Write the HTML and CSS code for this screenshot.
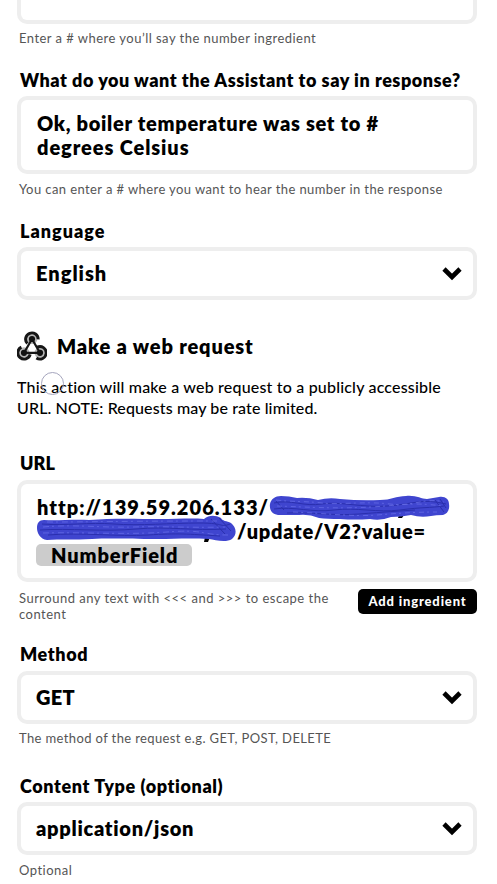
FILE: index.html
```
<!DOCTYPE html>
<html lang="en">
<head>
<meta charset="utf-8">
<title>Make a web request</title>
<link rel="stylesheet" href="styles.css">
</head>
<body>
<main class="form">
  <section class="field">
    <div class="box box-cut"></div>
    <p class="help">Enter a # where you’ll say the number ingredient</p>
  </section>

  <section class="field field-response">
    <h3 class="label label-question">What do you want the Assistant to say in response?</h3>
    <div class="box box-text">
      <p class="line line-ok">Ok, boiler temperature was set to #</p>
      <p class="line line-degrees">degrees Celsius</p>
    </div>
    <p class="help help-wide">You can enter a # where you want to hear the number in the response</p>
  </section>

  <section class="field field-language">
    <h3 class="label label-language">Language</h3>
    <div class="box select">
      <span class="value value-english">English</span>
      <svg class="chevron" viewBox="0 0 20 14"><path d="M2 2 10 10 18 2" fill="none" stroke="#000" stroke-width="4.6"/></svg>
    </div>
  </section>

  <header class="action">
    <svg class="hook" viewBox="0 0 30 30">
      <g fill="#b5b5b5"><circle cx="15" cy="7.6" r="5.5"/><circle cx="7" cy="21.8" r="5.5"/><circle cx="23" cy="21.8" r="5.5"/></g>
      <g fill="none" stroke="#161616">
        <path d="M15 8 7.5 21M15 8 22.5 21M7 21.8H23" stroke-width="2.2"/>
        <g stroke-width="2.9">
          <path d="M10.4 12.6A6.3 6.3 0 1 1 21.2 8.4"/>
          <path d="M4.4 16.1A6.3 6.3 0 1 0 13.2 23.4"/>
          <path d="M20.2 16.1A6.3 6.3 0 1 1 19.4 27"/>
        </g>
      </g>
      <g fill="#111"><circle cx="15" cy="8" r="3.1"/><circle cx="7" cy="21.8" r="3.1"/><circle cx="23" cy="21.8" r="3.1"/></g>
    </svg>
    <h2 class="title">Make a web request</h2>
  </header>
  <div class="description">
    <p class="desc-first">This action will make a web request to a publicly accessible</p>
    <p class="desc-second">URL. NOTE: Requests may be rate limited.</p>
    <span class="pointer"></span>
  </div>

  <section class="field field-url">
    <h3 class="label label-url">URL</h3>
    <div class="box box-url">
      <p class="line line-address">http://139.59.206.133/</p>
      <p class="line line-path">/update/V2?value=</p>
      <p class="line line-token"><span class="token">NumberField</span></p>
      <svg class="scribble" viewBox="0 0 420 52">
        <path fill="#000" d="M368 20h5l-2 3h-4zM174 42h5l-2 5h-4z"/>
        <path fill="#3f45cf" d="M239 9C240 4 244 1 250 1Q258 1 266 3Q276 2 287 5Q298 2 309 4Q330 6 349 5C360 5 365 1 375 1C385 0 390 4 396 4Q402 3 408 2C414 1 418 4 418 9C419 15 416 19 412 20Q405 20 400 21Q390 23 380 20Q370 22 360 22Q350 26 339 24Q324 25 309 24Q296 24 288 23Q278 19 268 20Q258 20 249 20C242 20 238 16 239 9z"/>
        <path fill="#3f45cf" d="M13 25c14 1 28-1 45 0 24-2 49-1 71-1 17 0 32-1 44 0 5-4 11-4 17-1 1 3 6 3 10 5 6 5 6 12 1 16-6 4-17 1-23 0-21-1-34 0-52 0-27 0-46-1-65 0-18 1-32 0-45 1C9 44 6 38 6 33c0-5 2-8 7-8z"/>
        <g fill="none" stroke="#2a2fae" stroke-width="1">
          <path d="M243 8c16-4 30 4 48 1s40 4 66 2 34-8 58-2M243 14c20-3 38 4 60 1s44 3 66 0 30-2 44-4M256 18c24-1 46 3 72 1s40-3 56-4M245 6l8 9M404 5l9 12M409 4l6 9"/>
          <path d="M11 29c24 2 47-2 72 0s57-1 85-1 20 5 31 1M9 35c28-2 65 2 96-1s57 2 90 0M17 40c33-3 70 2 100 0s39-1 72 1M180 24l14 15M188 23l12 13"/>
        </g>
        <g fill="none" stroke="#656be6" stroke-width=".8">
          <path d="M245 5c18 2 29 1 46 3s44-2 68 1 34-7 54-2M246 11c30 1 60 3 94 1s40-5 72-1M262 17c30 1 60 5 84 3s42-3 60-3" stroke-dasharray="5 3 2 4"/>
          <path d="M12 32c30-3 60 1 90 0s58 1 92 0M12 38c42-1 86 2 124-1s34 3 61 3M16 27c40 0 80-1 170-1" stroke-dasharray="6 3 2 4"/>
        </g>
      </svg>
    </div>
    <div class="footer">
      <p class="help help-url"><span class="help-escape">Surround any text with &lt;&lt;&lt; and &gt;&gt;&gt; to escape the</span><br>content</p>
      <button class="button" type="button">Add ingredient</button>
    </div>
  </section>

  <section class="field field-method">
    <h3 class="label label-method">Method</h3>
    <div class="box select">
      <span class="value value-get">GET</span>
      <svg class="chevron" viewBox="0 0 20 14"><path d="M2 2 10 10 18 2" fill="none" stroke="#000" stroke-width="4.6"/></svg>
    </div>
    <p class="help help-method">The method of the request e.g. GET, POST, DELETE</p>
  </section>

  <section class="field field-type">
    <h3 class="label label-type">Content Type (optional)</h3>
    <div class="box select">
      <span class="value value-json">application/json</span>
      <svg class="chevron" viewBox="0 0 20 14"><path d="M2 2 10 10 18 2" fill="none" stroke="#000" stroke-width="4.6"/></svg>
    </div>
    <p class="help help-optional">Optional</p>
  </section>
</main>
</body>
</html>
```
FILE: styles.css
```
* { box-sizing: border-box; }
body { margin: 0; background: #fff; color: #000; font-family: Lato, "Open Sans", sans-serif; font-variant-ligatures: none; }
p, h2, h3 { margin: 0; white-space: nowrap; }

.form { width: 460px; margin-left: 17px; height: 884px; overflow: hidden; }

.box { border: 4px solid #eee; border-radius: 10px; background: #fff; }
.box-cut { height: 24px; border-top: 0; border-radius: 0 0 10px 10px; }
.box-text { height: 78px; padding: 11px 16px; }
.box-url { position: relative; height: 102px; padding: 11px 16px; }

.label { height: 24px; margin: 0 0 4px 3px; font-size: 18px; line-height: 24px; font-weight: 800; letter-spacing: .6px; }
.label-question { letter-spacing: .52px; }
.label-language { letter-spacing: 1px; }
.label-url { margin-bottom: 5px; letter-spacing: .1px; }
.label-method { margin-bottom: 5px; }

.help { height: 16px; margin: 6px 0 0 2px; font-size: 13px; line-height: 16px; color: #555; letter-spacing: .47px; }
.help-wide { margin-top: 7px; letter-spacing: .41px; }
.help-url { margin-top: 0; letter-spacing: .49px; }
.help-method { letter-spacing: .38px; }
.help-optional { margin-top: 7px; }

.field-response { margin-top: 22px; }
.field-language { margin-top: 22px; }
.field-url { margin-top: 33px; }
.field-method { margin-top: 20px; }
.field-type { margin-top: 28px; }

.line { height: 24px; font-size: 20px; line-height: 24px; font-weight: 800; letter-spacing: .7px; }
.line-degrees { letter-spacing: .9px; }
.line-address { letter-spacing: 1.04px; }
.line-path { margin-left: 200px; }
.line-token { letter-spacing: .88px; }

.select { display: flex; align-items: center; justify-content: space-between; height: 53px; padding: 0 11px 0 15px; }
.value { height: 25px; font-size: 20px; line-height: 24px; font-weight: 800; letter-spacing: .72px; }
.value-english { letter-spacing: 1px; }
.value-get { letter-spacing: .3px; }
.chevron { width: 20px; height: 14px; }

.action { display: flex; align-items: center; gap: 10px; height: 30px; margin-top: 31px; }
.hook { width: 30px; height: 30px; }
.title { font-size: 20px; line-height: 30px; font-weight: 800; letter-spacing: .83px; }

.description { position: relative; margin-top: 15px; font-size: 16px; line-height: 21px; font-weight: 500; }
.desc-first { letter-spacing: .19px; }
.desc-second { letter-spacing: .12px; }
.pointer { position: absolute; left: 24px; top: -4px; width: 23px; height: 23px; border: 1px solid #a5a5bd; border-radius: 50%; }

.token { display: inline-block; width: 156px; height: 22px; margin-left: -1px; padding-left: 15px; border-radius: 5px; background: #ccc; line-height: 22px; vertical-align: top; margin-top: 1px; }
.scribble { position: absolute; left: 10px; top: 11px; width: 420px; height: 52px; }

.footer { display: flex; align-items: flex-start; justify-content: space-between; height: 40px; }
.footer .help { padding-top: 8px; margin-top: 0; }
.button { width: 119px; height: 25px; margin-top: 7px; padding: 0; border: 0; border-radius: 5px; background: #000; color: #fff; font: 900 13px/25px Lato, sans-serif; letter-spacing: .85px; }
```
